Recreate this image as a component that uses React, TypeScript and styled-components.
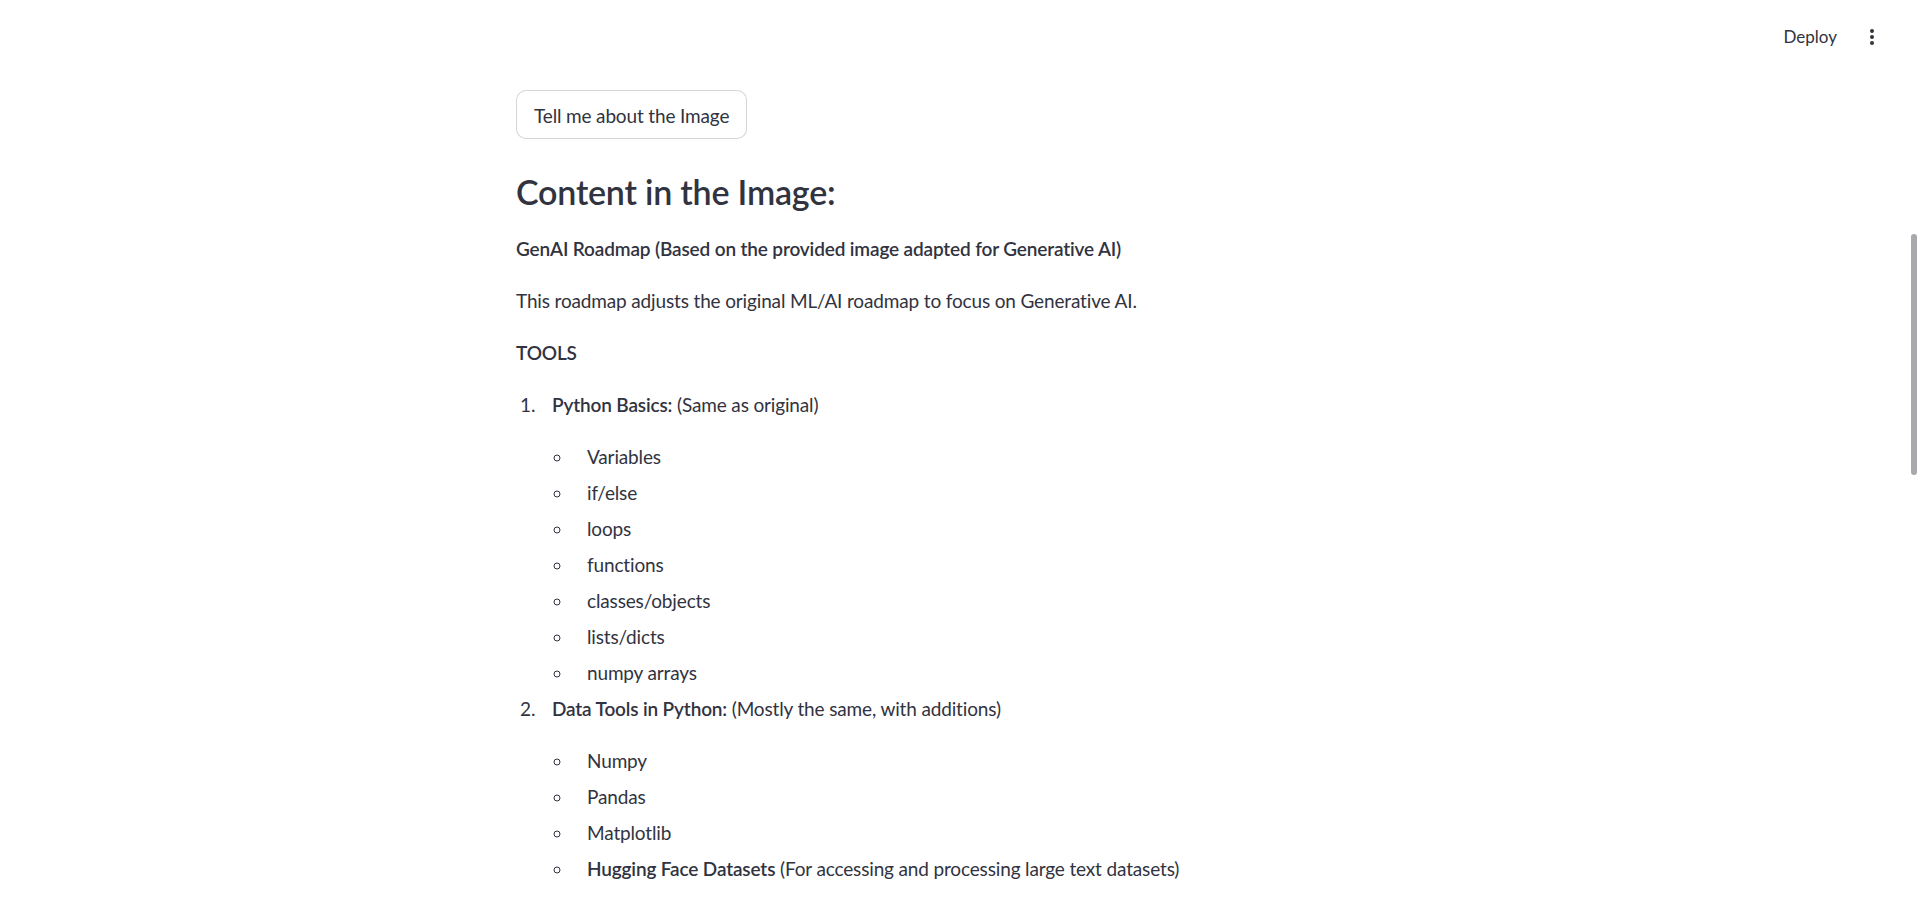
import React from 'react';
import styled, { createGlobalStyle } from 'styled-components';

const GlobalStyle = createGlobalStyle`
  html, body {
    margin: 0;
    padding: 0;
    background: #ffffff;
  }
  body {
    font-family: Lato, "Noto Sans", sans-serif;
    color: #31333f;
  }
  * {
    box-sizing: border-box;
  }
`;

const AppShell = styled.div`
  position: relative;
  height: 100vh;
  overflow: hidden;
  background: #ffffff;
`;

// top bar with deploy + menu
const Header = styled.header`
  height: 73px;
  display: flex;
  align-items: center;
  justify-content: flex-end;
  gap: 5px;
  padding-right: 26px;
`;

const DeployButton = styled.button`
  border: none;
  background: transparent;
  font-family: inherit;
  font-size: 17px;
  color: #31333f;
  padding: 6px 10px;
  cursor: pointer;
`;

const MenuButton = styled.button`
  width: 40px;
  height: 40px;
  display: flex;
  align-items: center;
  justify-content: center;
  border: none;
  background: transparent;
  padding: 0;
  color: #31333f;
  cursor: pointer;
`;

const ScrollThumb = styled.div`
  position: absolute;
  top: 234px;
  right: 1px;
  width: 6px;
  height: 241px;
  border-radius: 3px;
  background: #a8a8ad;
`;

const Main = styled.main`
  width: 886px;
  margin: 0 auto;
  padding-top: 17px;
  font-size: 19px;
  letter-spacing: -0.15px;
  line-height: 32px;
`;

const ActionButton = styled.button`
  height: 49px;
  padding: 2px 17px 0;
  border: 1px solid rgba(49, 51, 63, 0.2);
  border-radius: 10px;
  background: #ffffff;
  font-family: inherit;
  font-size: 19px;
  letter-spacing: -0.15px;
  color: #31333f;
  cursor: pointer;
`;

const Heading = styled.h3`
  margin: 32px 0 20px;
  font-size: 34px;
  letter-spacing: -0.2px;
  line-height: 42px;
  font-weight: 600;
`;

const Para = styled.p<{ $bold?: boolean }>`
  margin: 0 0 20px;
  font-weight: ${(p) => (p.$bold ? 600 : 400)};
`;

const NumberedList = styled.ol`
  margin: 0;
  padding: 0;
  list-style: decimal;
`;

const NumberedItem = styled.li`
  margin: 4px 0 4px 24px;
  padding-left: 12px;
`;

const BulletList = styled.ul`
  margin: 0;
  padding: 0;
  list-style: circle;
`;

const BulletItem = styled.li`
  margin: 4px 0 4px 21px;
  padding-left: 14px;
`;

const Strong = styled.strong`
  font-weight: 600;
`;

type Bullet = { bold?: string; text?: string };
type Section = { title: string; note: string; items: Bullet[] };

const sections: Section[] = [
  {
    title: 'Python Basics:',
    note: '(Same as original)',
    items: [
      { text: 'Variables' },
      { text: 'if/else' },
      { text: 'loops' },
      { text: 'functions' },
      { text: 'classes/objects' },
      { text: 'lists/dicts' },
      { text: 'numpy arrays' },
    ],
  },
  {
    title: 'Data Tools in Python:',
    note: '(Mostly the same, with additions)',
    items: [
      { text: 'Numpy' },
      { text: 'Pandas' },
      { text: 'Matplotlib' },
      { bold: 'Hugging Face Datasets', text: '(For accessing and processing large text datasets)' },
      { bold: 'Hugging Face Tokenizers', text: '(For preparing text data for language models)' },
    ],
  },
];

const KebabIcon = () => (
  <svg width="20" height="20" viewBox="0 0 20 20" fill="currentColor">
    <circle cx="10" cy="4" r="2" />
    <circle cx="10" cy="10" r="2" />
    <circle cx="10" cy="16" r="2" />
  </svg>
);

export default function App() {
  return (
    <AppShell>
      <GlobalStyle />
      <Header>
        <DeployButton>Deploy</DeployButton>
        <MenuButton aria-label="Main menu">
          <KebabIcon />
        </MenuButton>
      </Header>

      <Main>
        <ActionButton>Tell me about the Image</ActionButton>
        <Heading>Content in the Image:</Heading>
        <Para $bold>GenAI Roadmap (Based on the provided image adapted for Generative AI)</Para>
        <Para>This roadmap adjusts the original ML/AI roadmap to focus on Generative AI.</Para>
        <Para $bold>TOOLS</Para>

        <NumberedList>
          {sections.map((s) => (
            <NumberedItem key={s.title}>
              <Para>
                <Strong>{s.title}</Strong> {s.note}
              </Para>
              <BulletList>
                {s.items.map((b, i) => (
                  <BulletItem key={i}>
                    {b.bold && <Strong>{b.bold}</Strong>}
                    {b.bold && b.text ? ' ' : ''}
                    {b.text}
                  </BulletItem>
                ))}
              </BulletList>
            </NumberedItem>
          ))}
        </NumberedList>
      </Main>

      <ScrollThumb />
    </AppShell>
  );
}
